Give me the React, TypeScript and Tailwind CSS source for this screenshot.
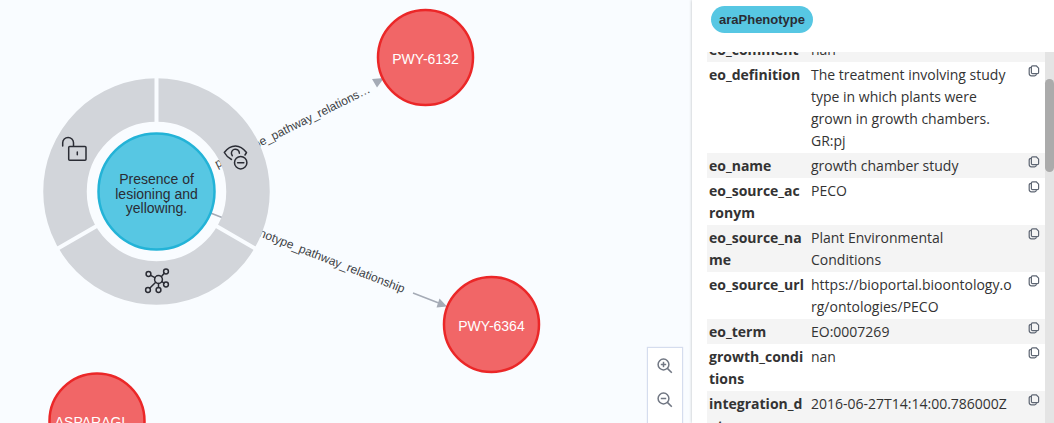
import React from "react";

type Property = { name: string; value: string };

const properties: Property[] = [
  { name: "eo_comment", value: "nan" },
  {
    name: "eo_definition",
    value:
      "The treatment involving study type in which plants were grown in growth chambers. GR:pj",
  },
  { name: "eo_name", value: "growth chamber study" },
  { name: "eo_source_acronym", value: "PECO" },
  { name: "eo_source_name", value: "Plant Environmental Conditions" },
  { name: "eo_source_url", value: "https://bioportal.bioontology.org/ontologies/PECO" },
  { name: "eo_term", value: "EO:0007269" },
  { name: "growth_conditions", value: "nan" },
  { name: "integration_date", value: "2016-06-27T14:14:00.786000Z" },
];

function CopyIcon() {
  return (
    <svg width="12" height="12" viewBox="0 0 12 12" fill="none" stroke="#5e6673" strokeWidth="1.2" strokeLinejoin="round" aria-hidden="true">
      <path d="M4.6 .8h3.6l2.4 2.3v4.3q0 1.2-1.2 1.2H4.6q-1.2 0-1.2-1.2V2q0-1.2 1.2-1.2Z" />
      <path d="M3.2 2.4Q1.2 2.4 1.2 4v4.6q0 2.2 2.2 2.2h3.2q1.6 0 1.8-1.8" />
    </svg>
  );
}

function ZoomIcon({ plus = false }: { plus?: boolean }) {
  return (
    <svg width="16" height="16" viewBox="0 0 16 16" fill="none" stroke="#717783" strokeWidth="1.5" aria-hidden="true">
      <circle cx="6.5" cy="6.5" r="5.4" />
      <path d="m10.4 10.4 4.4 4.4M3.8 6.5h5.4" />
      {plus && <path d="M6.5 3.8v5.4" />}
    </svg>
  );
}

function Node({ x, y, label }: { x: number; y: number; label: string }) {
  return (
    <g>
      <circle cx={x} cy={y} r="47.5" fill="#f16667" stroke="#eb2728" strokeWidth="2.5" />
      <text x={x} y={y + 6} textAnchor="middle" fill="#ffffff" fontSize="14">
        {label}
      </text>
    </g>
  );
}

function Graph() {
  return (
    <svg
      className="block h-full w-full font-['Liberation_Sans',Arial,sans-serif]"
      role="img"
      aria-label="Phenotype pathway graph"
    >
      <g fill="#a5abb6" stroke="#a5abb6" strokeWidth="1.5">
        <path d="M208 212 222 217.500M413 293 440 303.500" />
        <path stroke="none" d="M447 306.500 439.500 298.500 436.500 307.500ZM384 78 372 79 377 87.500Z" />
      </g>
      <g fontSize="12" fill="#3d3f45" textAnchor="end">
        <text transform="translate(371 92) rotate(-26.300)">phenotype_pathway_relations…</text>
        <text transform="translate(403 293) rotate(21.500)">phenotype_pathway_relationship</text>
      </g>

      <g transform="translate(156.500 191.500)">
        <circle r="91.500" fill="none" stroke="#d2d5da" strokeWidth="43.500" />
        <path
          d="M0-69V-115M59.800 34.500 99.600 57.500M-59.800 34.500-99.600 57.500"
          stroke="#f9fcff"
          strokeWidth="4"
        />
        <circle r="58" fill="#57c7e3" stroke="#23b3d7" strokeWidth="2.500" />
        <g fill="#2a2c34" fontSize="14" textAnchor="middle">
          <text y="-8">Presence of</text>
          <text y="7">lesioning and</text>
          <text y="21">yellowing.</text>
        </g>
      </g>

      <g fill="none" stroke="#2a2c34" strokeWidth="1.500" strokeLinecap="round" strokeLinejoin="round">
        <path d="M62.700 146v-3.200a5.400 5.400 0 0 1 10.800 0v3.500" />
        <rect x="68.700" y="146.600" width="17.300" height="13.700" rx="1" />
        <path d="M77.300 151.900v2.800" />

        <path d="M231.500 159.500C228 157.700 225.700 155 224.300 152.500 228.300 147 231.500 145.900 235.500 145.900S243 148 246.500 152.500L245 155" />
        <path d="M232.300 155.700A4 4 0 1 1 239.400 153.200" />
        <circle cx="240.700" cy="162.700" r="6.200" />
        <path d="M237.600 162.700h6.200" />

        <circle cx="158.500" cy="279.500" r="3.900" />
        <circle cx="148.500" cy="274" r="2.400" />
        <circle cx="166" cy="271.500" r="2.400" />
        <circle cx="166" cy="284.500" r="2.400" />
        <circle cx="158.500" cy="290" r="2.400" />
        <circle cx="148" cy="290" r="2.400" />
        <path d="M150.600 275.300 155 277.700M161.300 276.700 164.200 273.300M162 281.500 163.900 283.200M158.500 283.400V287.600M155.700 282.300 149.700 288.200" />
      </g>

      <Node x={425.5} y={57.5} label="PWY-6132" />
      <Node x={491.5} y={324.5} label="PWY-6364" />
      <Node x={97} y={421} label="ASPARAGI…" />
    </svg>
  );
}

export default function App() {
  return (
    <div className="flex h-screen overflow-hidden bg-[#f9fcff] text-[#333333]">
      <main className="relative min-w-0 flex-1">
        <Graph />
        <div className="absolute top-[347px] right-[9px] flex w-9 flex-col items-center border border-[#d5ddee] bg-white py-2 shadow-[0_0_1px_#d5ddee]">
          <button type="button" aria-label="Zoom in" className="flex h-[34px] w-full justify-center pt-[2px]">
            <ZoomIcon plus />
          </button>
          <button type="button" aria-label="Zoom out" className="flex h-[34px] w-full justify-center pt-[2px]">
            <ZoomIcon />
          </button>
          <button type="button" aria-label="Zoom to fit" className="h-[34px] w-full" />
        </div>
      </main>

      <aside className="relative flex w-[362px] shrink-0 flex-col bg-white shadow-[0_0_3px_rgba(0,0,0,0.25)]">
        <header className="flex h-[52px] shrink-0 items-start px-[19px] pt-[6px]">
          <span className="rounded-full bg-[#57c7e3] px-2 font-['Liberation_Sans',Arial,sans-serif] text-[13px] leading-[27px] font-bold text-[#2a2c34]">
            araPhenotype
          </span>
        </header>
        <div className="flex min-h-0 flex-1 pl-[15px]">
          <div className="min-w-0 flex-1 overflow-hidden">
            <table className="-mt-[15px] w-full table-fixed border-collapse font-['Open_Sans','Noto_Sans',sans-serif] text-[14px] leading-[22px]">
              <colgroup>
                <col className="w-[102px]" />
                <col />
                <col className="w-[24px]" />
              </colgroup>
              <tbody>
                {properties.map((p) => (
                  <tr key={p.name} className="align-top odd:bg-[#f4f4f4]">
                    <th scope="row" className="pt-[2px] pr-[5px] pb-[1px] pl-[2px] text-left font-bold break-all">
                      {p.name}
                    </th>
                    <td className="pt-[2px] pr-[7px] pb-[1px] pl-[2px] wrap-anywhere">{p.value}</td>
                    <td className="pt-[3px]">
                      <button type="button" aria-label={`Copy ${p.name}`} className="ml-[7px] block">
                        <CopyIcon />
                      </button>
                    </td>
                  </tr>
                ))}
              </tbody>
            </table>
          </div>
          <div className="w-[9px] shrink-0 bg-[#e4e4e4] pt-[27px]">
            <div className="h-[93px] rounded-full bg-[#ababab]" />
          </div>
        </div>
      </aside>
    </div>
  );
}
